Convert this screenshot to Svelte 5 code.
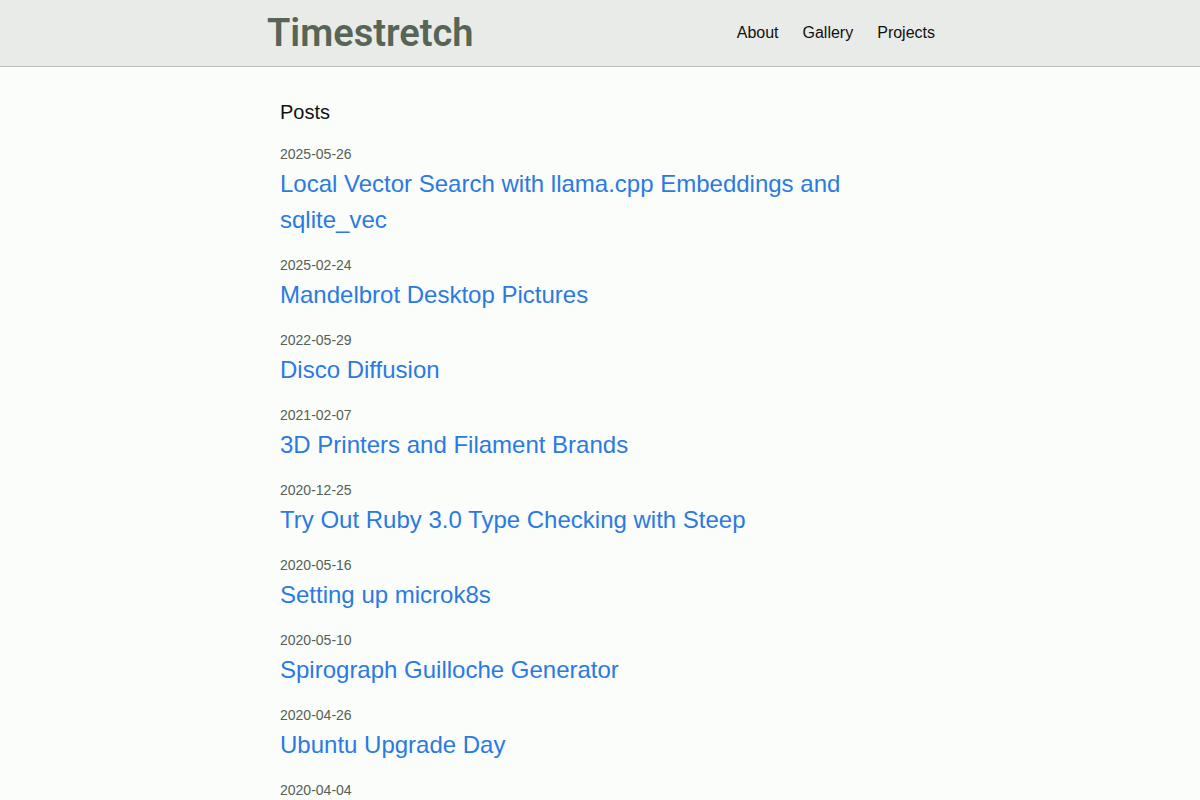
<script lang="ts">
    const links: { label: string; href: string }[] = [
        { label: "About", href: "#about" },
        { label: "Gallery", href: "#gallery" },
        { label: "Projects", href: "#projects" },
    ];

    const posts: { date: string; title?: string }[] = [
        { date: "2025-05-26", title: "Local Vector Search with llama.cpp Embeddings and sqlite_vec" },
        { date: "2025-02-24", title: "Mandelbrot Desktop Pictures" },
        { date: "2022-05-29", title: "Disco Diffusion" },
        { date: "2021-02-07", title: "3D Printers and Filament Brands" },
        { date: "2020-12-25", title: "Try Out Ruby 3.0 Type Checking with Steep" },
        { date: "2020-05-16", title: "Setting up microk8s" },
        { date: "2020-05-10", title: "Spirograph Guilloche Generator" },
        { date: "2020-04-26", title: "Ubuntu Upgrade Day" },
        { date: "2020-04-04" },
    ];
</script>

<header class="site-header">
    <div class="header-inner">
        <a class="logo" href="#home">Timestretch</a>
        <nav class="site-nav">
            {#each links as { label, href }}
                <a {href}>{label}</a>
            {/each}
        </nav>
    </div>
</header>

<main class="content">
    <h1>Posts</h1>
    <ul class="post-list">
        {#each posts as { date, title }}
            <li>
                <time datetime={date}>{date}</time>
                {#if title}
                    <h2><a href="#{date}">{title}</a></h2>
                {/if}
            </li>
        {/each}
    </ul>
</main>

<style>
    :global(body) {
        margin: 0;
        background-color: #fafdf9;
        color: #111;
        font-family: "Liberation Sans", Arial, Helvetica, sans-serif;
        font-size: 16px;
        line-height: 24px;
    }

    .site-header {
        background-color: #e8ebe7;
        border-bottom: 1px solid #bfc1be;
    }

    .header-inner {
        display: flex;
        align-items: center;
        justify-content: space-between;
        max-width: 670px;
        min-height: 66px;
        margin: 0 auto;
    }

    .logo {
        padding-left: 2px;
        color: #566556;
        font-family: Roboto, "Liberation Sans", sans-serif;
        font-size: 38px;
        font-weight: 600;
        line-height: 66px;
        text-decoration: none;
    }

    .site-nav {
        display: flex;
        gap: 24px;
    }

    .site-nav a {
        color: #111;
        text-decoration: none;
    }

    .content {
        max-width: 640px;
        margin: 0 auto;
        padding: 30px 0 0;
    }

    h1 {
        margin: 0 0 18px;
        font-size: 20px;
        font-weight: 400;
        line-height: 30px;
    }

    .post-list {
        display: flex;
        flex-direction: column;
        gap: 18px;
        margin: 0;
        padding: 0;
        list-style: none;
    }

    time {
        display: block;
        margin-bottom: 2px;
        color: #566056;
        font-size: 14px;
        line-height: 19px;
    }

    h2 {
        margin: 0;
        font-size: 24px;
        font-weight: 400;
        line-height: 36px;
    }

    h2 a {
        color: #2a7ae2;
        text-decoration: none;
    }

    a:hover {
        text-decoration: underline;
    }
</style>
